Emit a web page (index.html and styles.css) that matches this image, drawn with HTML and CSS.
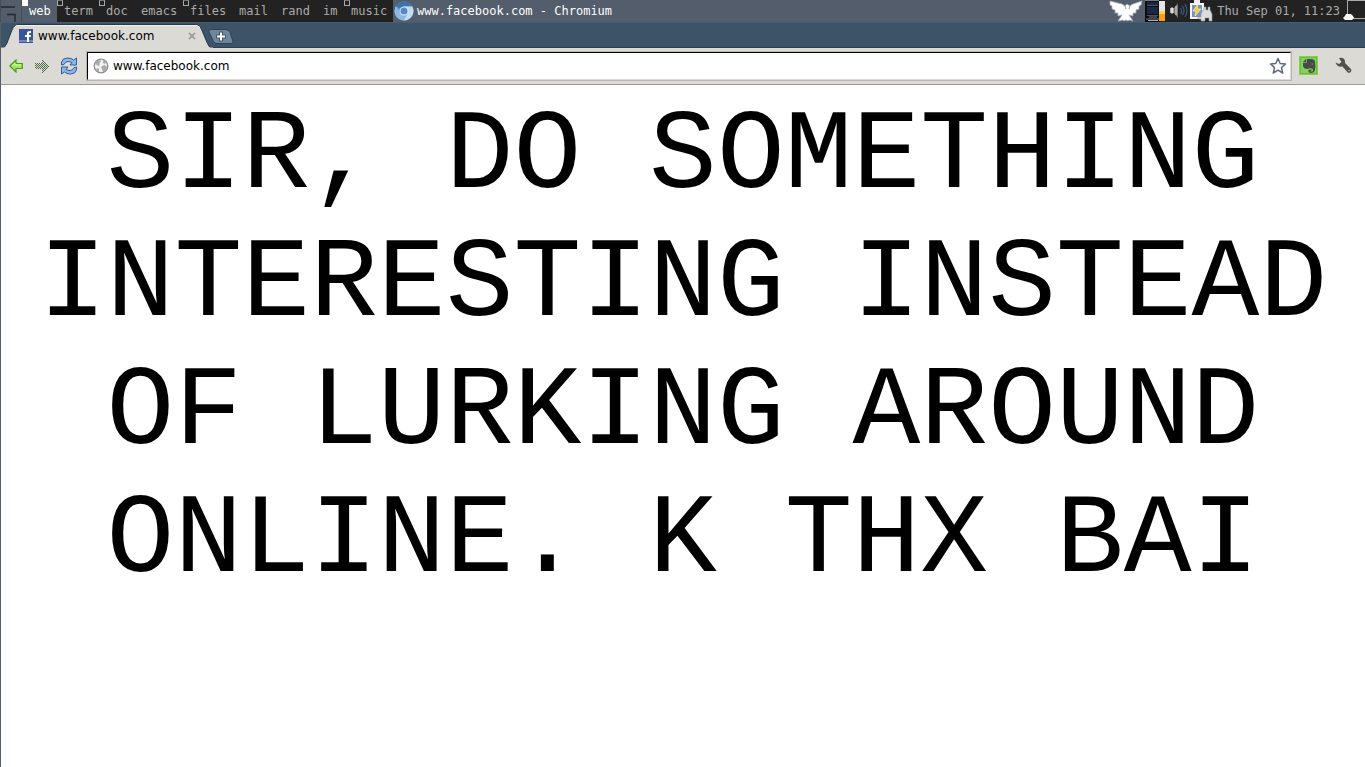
FILE: index.html
```html
<!DOCTYPE html>
<html lang="en">
<head>
    <meta charset="UTF-8">
    <meta name="viewport" content="width=device-width, initial-scale=1.0">
    <title>www.facebook.com</title>
    <link rel="stylesheet" href="styles.css">
</head>
<body>
    <header class="wibox">
        <button class="launcher" aria-label="Menu">
            <svg width="22" height="22" viewBox="0 0 22 22" fill="none" stroke="#25282d" stroke-width="1.4">
                <path d="M0 7h15M7 14.500h8V22"/>
                <path d="M.5 0v22M21.500 0v22" stroke="#444d5a" stroke-width="1"/>
            </svg>
        </button>
        <nav class="tags">
            <a class="tag selected used" href="#">web</a>
            <a class="tag used" href="#">term</a>
            <a class="tag used" href="#">doc</a>
            <a class="tag" href="#">emacs</a>
            <a class="tag used" href="#">files</a>
            <a class="tag" href="#">mail</a>
            <a class="tag" href="#">rand</a>
            <a class="tag" href="#">im</a>
            <a class="tag used" href="#">music</a>
        </nav>
        <div class="task">
            <svg width="20" height="20" viewBox="0 0 20 20">
                <circle cx="10" cy="10" r="9.500" fill="#6f9fce"/>
                <path d="M10 10L1.800 5.200A9.500 9.500 0 0 1 18.300 5.500H10z" fill="#3f74ab"/>
                <path d="M10 5.500h8.300A9.500 9.500 0 0 1 9.500 19.500L14 12z" fill="#c4dcf1"/>
                <path d="M1.800 5.200A9.500 9.500 0 0 0 9.500 19.500L13 13 6 12z" fill="#8db8df"/>
                <circle cx="10" cy="10" r="4.500" fill="#dbe9f6"/>
                <circle cx="10" cy="10" r="3.500" fill="#5588c4"/>
            </svg>
            <span>www.facebook.com - Chromium</span>
        </div>
        <div class="tray">
            <svg class="bird" width="36" height="22" viewBox="0 0 36 22">
                <path d="M1 1l12 3q4 2 4 5l-1-3 2-2 3 2-1 3q0-4 4-5l9-3-1 4-2 1 0 3-3 1 0 3-3 0 0 3-4-1 4 6-4-1-1 1-2-1-2 1-1-1-5 1 4-6-4 1 0-3-3 0 0-3-3-1 0-3-2-1z" fill="#fff" stroke="#a4abb6" stroke-width=".8"/>
            </svg>
            <svg width="20" height="22" viewBox="0 0 20 22">
                <path d="M0 0h15v22H0z" fill="#0c0d10"/>
                <path d="M0 .5h14M1 19h13M4 17h8" stroke="#777b82"/>
                <path d="M2 2h11v3H2zM2 7h11v7H2z" fill="#1b2844"/>
                <path d="M2 15.500h11M2 5.500h11" stroke="#4c515b"/>
                <path d="M3 20h10v1H3z" fill="#aaa"/>
                <path d="M14 1h6v20h-6z" fill="#e4e4e7"/>
                <path d="M14 11h6v10h-6z" fill="#f5a11c"/>
                <path d="M14 11h6v3h-6z" fill="#ffd83b"/>
            </svg>
            <svg width="24" height="22" viewBox="0 0 24 22" fill="none">
                <path d="M5 8h4l4-5v15l-4-5H5z" fill="#777"/>
                <path d="M6 8h2v5H6zM11 6v9" fill="#ddd" stroke="#ddd"/>
                <path d="M15.500 8q2 3 0 6M17.500 6q3 5 0 9M20 4q4 7 0 13" stroke="#35577e" stroke-width="1.300"/>
            </svg>
            <svg width="24" height="22" viewBox="0 0 24 22">
                <path d="M5 0h6v3H5z" fill="#eee"/>
                <path d="M1 3h14v16H1z" fill="#f4f6fa"/>
                <path d="M3 5h10v12H3z" fill="#7794c4"/>
                <path d="M9 4l-5 7h3l-1 5 6-7H8z" fill="#ffc52d" stroke="#fff3b0" stroke-width=".7"/>
                <path d="M12 14l2-4h1V7h2v3h2V7h2v3l2 4v7h-3v-3h-4v3h-4v-2h-3v-2h3z" fill="#dcdcdc" stroke="#999" stroke-width=".6"/>
            </svg>
            <time>Thu Sep 01, 11:23</time>
            <button class="layout" aria-label="Layout">
                <svg width="22" height="22" viewBox="0 0 22 22">
                    <path d="M4.500 0v18.500H22M4 .5h18" fill="none" stroke="#aaa"/>
                    <path d="M0 18l2-2 1-2h5l2 2 1 2-2 2H2z" fill="#fff"/>
                </svg>
            </button>
        </div>
    </header>
    <div class="window">
        <div class="tabstrip">
            <div class="tab">
                <svg class="tab-shape" width="212" height="26" viewBox="0 0 212 26">
                    <path d="M0 26q4-1 6-6l5-13Q13 1.500 18 1.500H194q5 0 7 6l5 12q2 5.500 6 6.500z" fill="#dcdad5" stroke="#24384c"/>
                    <path d="M0 25.500H212" stroke="#dcdad5" stroke-width="2"/>
                    <path d="M14 3.500q2-1 4-1H194q3 0 5 2" fill="none" stroke="#f2f1ef"/>
                </svg>
                <svg class="favicon" width="14" height="14" viewBox="0 0 14 14">
                    <path d="M0 0h14v14H0z" fill="#38549a"/>
                    <path d="M0 11h14v2H0z" fill="#738abf"/>
                    <path d="M8 13V8H6V6h2V4.500Q8 2 10.500 2H12v2h-1q-1 0-1 1v1h2l-.3 2H10v5z" fill="#fff"/>
                </svg>
                <span class="tab-title">www.facebook.com</span>
                <button class="tab-close" aria-label="Close tab">
                    <svg width="8" height="8" viewBox="0 0 8 8"><path d="M1 1l6 6M7 1L1 7" stroke="#999791" stroke-width="1.700"/></svg>
                </button>
            </div>
            <button class="new-tab" aria-label="New tab">
                <svg width="26" height="16" viewBox="0 0 26 16">
                    <path d="M3 .5h14q4 0 5 3l3 9q.5 2-2 2H9q-3 0-4-3L1 3Q0 .5 3 .5z" fill="#70869a" stroke="#2c4156"/>
                    <path d="M8 7.500h10M13 2.500v10" stroke="#40566a" stroke-width="4"/>
                    <path d="M9 7.500h8M13 3.500v8" stroke="#fff" stroke-width="2"/>
                </svg>
            </button>
        </div>
        <div class="toolbar">
            <button class="tool" aria-label="Back">
                <svg width="14" height="14" viewBox="0 0 14 14"><path d="M.8 7L7 1v3.500h6.300v5H7V13z" fill="#a5e55c" stroke="#42a01b" stroke-width="1.200"/><path d="M3 7l3-3v2h6" fill="none" stroke="#d8f7b2"/></svg>
            </button>
            <button class="tool" aria-label="Forward">
                <svg width="14" height="14" viewBox="0 0 14 14" shape-rendering="crispEdges">
                    <defs><pattern id="dots" width="2" height="2" patternUnits="userSpaceOnUse"><path d="M0 0h1v1H0zM1 1h1v1H1z" fill="#4e6b41"/></pattern></defs>
                    <path d="M14 7L7 0v4H0v6h7v4z" fill="url(#dots)"/>
                </svg>
            </button>
            <button class="tool reload" aria-label="Reload">
                <svg width="18" height="18" viewBox="0 0 18 18" fill="#8fb5e3" stroke="#2f5f9f" stroke-linejoin="round">
                    <path d="M1.500 8V5q1-4 6-4 4 0 6 2l3-2v7H10l2-2.500q-2-1-4-1-3 0-4 3z"/>
                    <path d="M16.500 10v3q-1 4-6 4-4 0-6-2l-3 2v-7H8l-2 2.500q2 1 4 1 3 0 4-3z"/>
                </svg>
            </button>
            <form class="omnibox">
                <svg width="16" height="16" viewBox="0 0 16 16">
                    <circle cx="8" cy="8" r="6.800" fill="#f2f2f2" stroke="#8e8e8e" stroke-width="1.300"/>
                    <path d="M2 6q1-3 5-4l1 1-1 2-1 1 1 1-2 1-1-1zM9 8l3-1 2 2-2 4-2 1-1-3-1-2zM10 2l3 2-1 2-2-1zM4 10l2 1v3l-3-2z" fill="#a9a9a9"/>
                </svg>
                <input type="text" aria-label="Address" value="www.facebook.com">
                <button type="button" aria-label="Bookmark">
                    <svg width="18" height="18" viewBox="0 0 18 18"><path d="M9 1.500l2.200 5 5.300.5-4 3.600 1.200 5.400L9 13.200 4.300 16l1.200-5.400L1.500 7l5.300-.5z" fill="#fff" stroke="#5f6b84" stroke-width="1.500" stroke-linejoin="round"/></svg>
                </button>
            </form>
            <button class="extension" aria-label="Clip page">
                <svg width="19" height="19" viewBox="0 0 19 19">
                    <path d="M.5.5h18v18H.5z" fill="#69bd3b" stroke="#82cf55"/>
                    <path d="M2 2h15v15H2z" fill="#86d256"/>
                    <path d="M4 6l3-3h5q4 0 4 3 .8 4 0 8-.8 3-4 3-3-.2-2.500-3l3-.8v1.500h-1v.8h2l.5-2.500-3-1-2 1Q4.500 13 4 10z" fill="#454b46"/>
                    <path d="M4 6.500h3.500V3M12.500 8h1.500" fill="none" stroke="#8c968a"/>
                </svg>
            </button>
            <button class="wrench" aria-label="Settings">
                <svg width="17" height="17" viewBox="0 0 17 17"><path d="M4 1q5-1 6 3l0 2 6 6q1 2-.5 3.300-1.500 1-3 0L7.500 9.500Q2 10.500.5 5.500L4 7l2.500-2z" fill="#505050"/><circle cx="14" cy="13.500" r=".8" fill="#bbb"/></svg>
            </button>
        </div>
        <main class="page">SIR, DO SOMETHING INTERESTING INSTEAD OF LURKING AROUND ONLINE. K THX BAI</main>
    </div>
</body>
</html>
```
FILE: styles.css
```css
body {
    margin: 0;
    min-height: 100vh;
    display: flex;
    flex-direction: column;
    background-color: white;
    font-family: "DejaVu Sans", sans-serif;
    font-size: 12px;
}
button {
    display: flex;
    align-items: center;
    justify-content: center;
    padding: 0;
    border: none;
    background: none;
}
svg {
    display: block;
    flex: none;
}
.wibox {
    display: flex;
    height: 22px;
    background-color: #535d6c;
    color: #aaa;
    font-family: "DejaVu Sans Mono", monospace;
    line-height: 22px;
    white-space: nowrap;
}
.tags {
    display: grid;
    grid-template-columns: 35px 42px 35px 49px 49px 42px 42px 28px 49px;
    background-color: #222;
}
.tag {
    position: relative;
    padding-left: 7px;
    color: #aaa;
    text-decoration: none;
}
.tag.selected {
    background-color: #535d6c;
    color: white;
}
.used::before {
    content: "";
    position: absolute;
    top: 0;
    left: 0;
    width: 4px;
    height: 4px;
    border: 1px solid #aaa;
    border-top-color: #777;
}
.selected.used::before {
    background-color: white;
    border-color: white;
}
.task {
    display: flex;
    flex: 1;
    align-items: center;
    gap: 3px;
    padding-left: 1px;
    color: white;
}
.tray {
    display: flex;
    background-color: #222;
}
.bird {
    background-color: #535d6c;
}
.tray time {
    padding: 0 3px 0 4px;
}
.window {
    flex: 1;
    display: flex;
    flex-direction: column;
    border-left: 1px solid #535d6c;
}
.tabstrip {
    display: flex;
    align-items: flex-end;
    height: 26px;
    border-top: 1px solid #4a5c70;
    background: linear-gradient(#3d5468 24px, #2c4054 24px, #2c4054 25px, #dcdad5 25px);
}
.tab {
    position: relative;
    display: flex;
    align-items: center;
    box-sizing: border-box;
    width: 207px;
    height: 26px;
    padding: 0 8px 0 18px;
}
.tab-shape {
    position: absolute;
    top: 0;
    left: 0;
}
.favicon, .tab-title, .tab-close {
    position: relative;
}
.tab-title {
    flex: 1;
    margin-left: 5px;
    color: black;
}
.tab-close {
    width: 16px;
    height: 16px;
}
.new-tab {
    position: relative;
    height: 20px;
    align-items: flex-start;
}
.toolbar {
    display: flex;
    align-items: center;
    box-sizing: border-box;
    height: 36px;
    padding: 0 13px 2px 8px;
    background-color: #dcdad5;
    border-bottom: 1px solid #9c9a95;
}
.tool {
    width: 14px;
    margin-right: 12px;
}
.reload {
    width: 16px;
    margin-right: 10px;
}
.omnibox {
    flex: 1;
    display: flex;
    align-items: center;
    box-sizing: border-box;
    height: 28px;
    margin-right: 8px;
    padding: 0 3px 0 5px;
    background-color: white;
    border: 1px solid;
    border-color: black #dcdad5 #dcdad5 black;
    outline: 1px solid #b9b6b0;
}
.omnibox input {
    flex: 1;
    min-width: 0;
    padding: 0 0 0 4px;
    border: none;
    outline: none;
    background: none;
    font: inherit;
    color: black;
}
.wrench {
    margin-left: 17px;
}
.page {
    padding: 8px;
    font-family: "Liberation Mono", monospace;
    font-size: 113px;
    line-height: 128px;
    text-align: center;
    color: black;
}
```
